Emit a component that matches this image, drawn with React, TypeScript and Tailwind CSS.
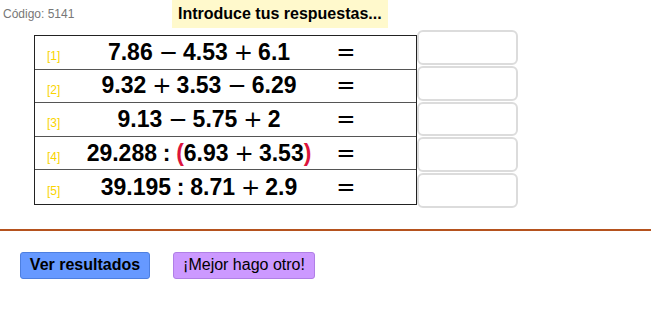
import React from "react"

type Tok = { t: string; k: "n" | "op" | "rel" | "lp" | "rp" }

const rows: { label: string; expr: Tok[] }[] = [
  {
    label: "[1]",
    expr: [
      { t: "7.86", k: "n" },
      { t: "−", k: "op" },
      { t: "4.53", k: "n" },
      { t: "+", k: "op" },
      { t: "6.1", k: "n" },
    ],
  },
  {
    label: "[2]",
    expr: [
      { t: "9.32", k: "n" },
      { t: "+", k: "op" },
      { t: "3.53", k: "n" },
      { t: "−", k: "op" },
      { t: "6.29", k: "n" },
    ],
  },
  {
    label: "[3]",
    expr: [
      { t: "9.13", k: "n" },
      { t: "−", k: "op" },
      { t: "5.75", k: "n" },
      { t: "+", k: "op" },
      { t: "2", k: "n" },
    ],
  },
  {
    label: "[4]",
    expr: [
      { t: "29.288", k: "n" },
      { t: ":", k: "rel" },
      { t: "(", k: "lp" },
      { t: "6.93", k: "n" },
      { t: "+", k: "op" },
      { t: "3.53", k: "n" },
      { t: ")", k: "rp" },
    ],
  },
  {
    label: "[5]",
    expr: [
      { t: "39.195", k: "n" },
      { t: ":", k: "rel" },
      { t: "8.71", k: "n" },
      { t: "+", k: "op" },
      { t: "2.9", k: "n" },
    ],
  },
]

// operators drawn thinner and wider, like the math renderer in the original
function Expr({ toks }: { toks: Tok[] }) {
  return (
    <span className="whitespace-nowrap">
      {toks.map((tk, i) => {
        if (tk.k === "op")
          return (
            <span
              key={i}
              className="inline-block w-[0.8em] mx-[0.26em] text-center font-normal font-['DejaVu_Sans',sans-serif]"
            >
              {tk.t}
            </span>
          )
        if (tk.k === "rel")
          return (
            <span key={i} className="inline-block mx-[0.25em]">
              {tk.t}
            </span>
          )
        if (tk.k === "lp" || tk.k === "rp")
          return (
            <span key={i} className="text-[#dc143c]">
              {tk.t}
            </span>
          )
        return <span key={i}>{tk.t}</span>
      })}
    </span>
  )
}

export default function App() {
  return (
    <div className="w-[651px] h-[327px] overflow-hidden bg-white font-['Liberation_Sans',Arial,sans-serif] text-black">
      <div className="flex h-[29px]">
        <div className="w-[172px] pl-[3px] pt-[5px] text-[12px] text-[#777]">Código: 5141</div>
        <div className="h-[28px] px-[6px] flex items-center bg-[#fff9cc] text-[16px] font-bold">
          Introduce tus respuestas...
        </div>
      </div>

      <div className="flex items-start">
        <div className="ml-[34px] mt-[6px] w-[383px] border border-[#222]">
          {rows.map((r, i) => (
            <div
              key={i}
              className={
                "flex items-center h-[33.6px] " + (i < rows.length - 1 ? "border-b border-[#555]" : "")
              }
            >
              <div className="w-[46px] pl-[12px] pt-[8px] text-[12px] text-[#f9d400]">{r.label}</div>
              <div className="w-[236px] text-center text-[23px] font-bold leading-none">
                <Expr toks={r.expr} />
              </div>
              <div className="w-[58px] text-center text-[23px] leading-none font-['DejaVu_Sans',sans-serif]">
                =
              </div>
            </div>
          ))}
        </div>

        <div className="mt-[1px] flex flex-col gap-[1px]">
          {rows.map((_, i) => (
            <div key={i} className="w-[101px] h-[34.8px] border-2 border-[#dcdcdc] rounded-[6px] bg-white" />
          ))}
        </div>
      </div>

      <div className="mt-[21px] h-[2px] bg-[#b5521e]" />

      <div className="mt-[21px] flex">
        <button className="ml-[20px] w-[130px] h-[27px] rounded-[3px] border border-[#4d7fe0] bg-[#6699ff] text-[16px] font-bold">
          Ver resultados
        </button>
        <button className="ml-[23px] w-[142px] h-[27px] rounded-[3px] border border-[#b07fe6] bg-[#cc99ff] text-[16px]">
          ¡Mejor hago otro!
        </button>
      </div>
    </div>
  )
}
